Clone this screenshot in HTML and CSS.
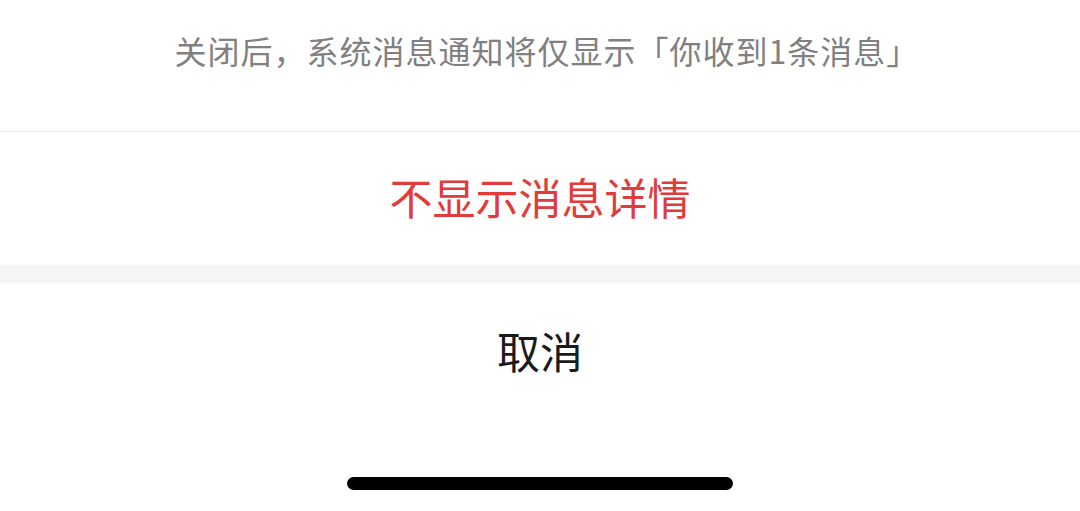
FILE: index.html
```html
<!DOCTYPE html>
<html lang="zh-CN">
<head>
    <meta charset="UTF-8">
    <meta name="viewport" content="width=device-width, initial-scale=1.0">
    <title>消息通知</title>
    <link rel="stylesheet" href="styles.css">
</head>
<body>
    <div class="sheet">
        <div class="sheet-tip">关闭后，系统消息通知将仅显示「你收到1条消息」</div>
        <div class="sheet-item danger">不显示消息详情</div>
        <div class="sheet-gap"></div>
        <div class="sheet-item">取消</div>
        <div class="home-bar"></div>
    </div>
</body>
</html>
```

FILE: styles.css
```css
* {
    margin: 0;
    padding: 0;
    box-sizing: border-box;
}
body {
    background-color: #fff;
    font-family: "Noto Sans CJK SC", "Noto Sans", sans-serif;
}
.sheet {
    width: 1080px;
    height: 511px;
    display: flex;
    flex-direction: column;
}
.sheet-tip {
    height: 132px;
    padding-top: 30px;
    padding-left: 14px;
    line-height: 40px;
    font-size: 32px;
    letter-spacing: 1px;
    color: #808080;
    text-align: center;
    border-bottom: 1px solid #ececec;
}
.sheet-item {
    height: 133px;
    display: flex;
    align-items: center;
    justify-content: center;
    font-size: 43px;
    color: #1a1a1a;
}
.sheet-item.danger {
    padding-bottom: 6px;
    color: #e03c3c;
}
.sheet-gap {
    height: 18px;
    background-color: #f5f5f5;
}
.home-bar {
    width: 386px;
    height: 13px;
    margin: 61px auto 0;
    border-radius: 7px;
    background-color: #000;
}
```
